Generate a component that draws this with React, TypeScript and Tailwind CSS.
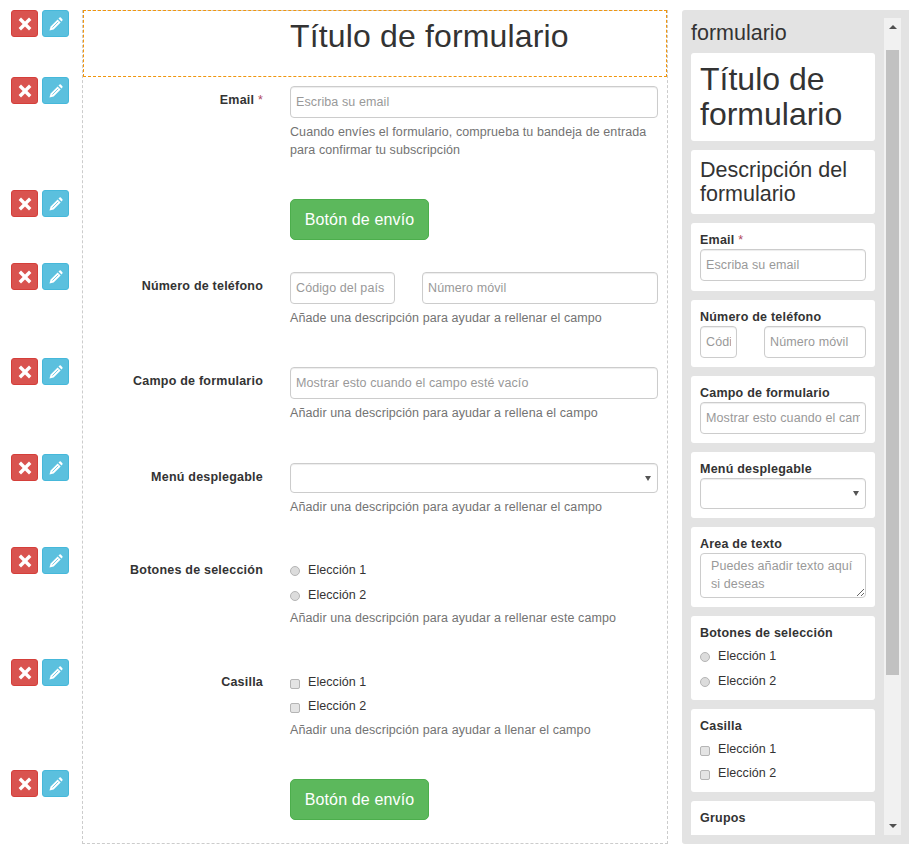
const actionRows = [67, 113, 73, 95, 96, 93, 112, 111, 60];

function Actions() {
  return (
    <div className="flex gap-[4px]">
      <button className="flex h-[27px] w-[27px] items-center justify-center rounded-[3px] border border-[#d43f3a] bg-[#d9534f]">
        <svg viewBox="0 0 14 14" className="h-[14px] w-[14px]">
          <path fill="#fff" d="M3 0.6 7 4.6 11 0.6 13.4 3 9.4 7 13.4 11 11 13.4 7 9.4 3 13.4 0.6 11 4.6 7 0.6 3Z" />
        </svg>
      </button>
      <button className="flex h-[27px] w-[27px] items-center justify-center rounded-[3px] border border-[#46b8da] bg-[#5bc0de]">
        <svg viewBox="0 0 14 14" className="h-[14px] w-[14px]">
          <path fill="#fff" d="M0.5 13.5 1.6 9.4 8.6 2.4 11.6 5.4 4.6 12.4Z" />
          <path fill="#fff" d="M9.5 1.5 10.6 0.6Q11.2 0.1 11.8 0.6L13.4 2.2Q13.9 2.8 13.4 3.4L12.5 4.5Z" />
          <path stroke="#5bc0de" strokeWidth="0.8" d="M3.4 10.6 9.2 4.8" />
        </svg>
      </button>
    </div>
  );
}

const inputClass =
  "block h-[32px] min-w-0 rounded-[4px] border border-[#ccc] bg-white px-[5px] text-[12.5px] tracking-[0.1px] text-[#555] shadow-[inset_0_1px_1px_rgba(0,0,0,0.075)] outline-none placeholder:text-[#999]";

const selectClass =
  "block w-full rounded-[4px] border border-[#ccc] bg-white shadow-[inset_0_1px_1px_rgba(0,0,0,0.075)]";

function Help({ className, children }: { className: string; children: React.ReactNode }) {
  return <p className={`${className} text-[12.5px] leading-[18px] tracking-[0.09px] text-[#737373]`}>{children}</p>;
}

function Star() {
  return <span className="font-normal text-[#b0485a]">*</span>;
}

function Row({ height, label, children }: { height: number; label?: React.ReactNode; children: React.ReactNode }) {
  return (
    <div className="flex gap-[27px] pr-[9px]" style={{ height }}>
      <label className="w-[180px] shrink-0 pt-[5px] text-right text-[12.5px] font-bold leading-[18px] tracking-[0.22px] text-[#333]">
        {label}
      </label>
      <div className="min-w-0 flex-1">{children}</div>
    </div>
  );
}

function Radio({ text }: { text: string }) {
  return (
    <div className="flex h-[25px] items-center gap-[8px] text-[12.5px] tracking-[0.07px] text-[#333]">
      <input
        type="radio"
        className="h-[10px] w-[10px] appearance-none rounded-full border border-[#b5b5b5] bg-[#dcdcdc]"
      />
      <span>{text}</span>
    </div>
  );
}

function Check({ text }: { text: string }) {
  return (
    <div className="flex h-[24px] items-center gap-[8px] text-[12.5px] tracking-[0.07px] text-[#333]">
      <input
        type="checkbox"
        className="mt-[4px] h-[10px] w-[10px] appearance-none rounded-[2px] border border-[#b5b5b5] bg-[#e4e4e4]"
      />
      <span>{text}</span>
    </div>
  );
}

function SubmitButton() {
  return (
    <button className="block h-[41px] w-[139px] rounded-[5px] border border-[#4cae4c] bg-[#5cb85c] text-[16px] tracking-[0.15px] text-white">
      Botón de envío
    </button>
  );
}

function Card({ height, children }: { height: number; children: React.ReactNode }) {
  return (
    <div className="shrink-0 rounded-[3px] bg-white px-[9px] pt-[8px]" style={{ height }}>
      {children}
    </div>
  );
}

function CardLabel({ children }: { children: React.ReactNode }) {
  return <div className="text-[12.5px] font-bold leading-[18px] tracking-[0.22px] text-[#333]">{children}</div>;
}

function Caret() {
  return <span className="absolute right-[7px] top-[13px] h-0 w-0 border-x-[3px] border-t-[5px] border-x-transparent border-t-[#555]" />;
}

export default function App() {
  return (
    <div className="flex h-[852px] w-[909px] overflow-hidden bg-white pt-[10px] font-['Liberation_Sans',Arial,sans-serif]">
      {/* action buttons */}
      <div className="w-[82px] shrink-0 pl-[11px]">
        {actionRows.map((h, i) => (
          <div key={i} style={{ height: h }}>
            <Actions />
          </div>
        ))}
      </div>

      {/* form canvas */}
      <div className="h-[834px] w-[586px] shrink-0 border border-dashed border-[#ccc]">
        <div className="-mt-px flex h-[67px] items-start border border-dashed border-[#f0950c] pl-[206px]">
          <h1 className="pt-[4px] text-[32px] leading-[42px] tracking-[0.15px] text-[#333]">Título de formulario</h1>
        </div>
        <div className="pt-[9px]">
          <Row height={113} label={<>Email <Star /></>}>
            <input className={`${inputClass} w-full`} placeholder="Escriba su email" />
            <Help className="mt-[5px]">
              Cuando envíes el formulario, comprueba tu bandeja de entrada para confirmar tu subscripción
            </Help>
          </Row>
          <Row height={73}>
            <SubmitButton />
          </Row>
          <Row height={95} label="Número de teléfono">
            <div className="flex gap-[27px]">
              <input className={`${inputClass} w-[105px]`} placeholder="Código del país" />
              <input className={`${inputClass} flex-1`} placeholder="Número móvil" />
            </div>
            <Help className="mt-[5px]">Añade una descripción para ayudar a rellenar el campo</Help>
          </Row>
          <Row height={96} label="Campo de formulario">
            <input className={`${inputClass} w-full`} placeholder="Mostrar esto cuando el campo esté vacío" />
            <Help className="mt-[5px]">Añadir una descripción para ayudar a rellena el campo</Help>
          </Row>
          <Row height={93} label="Menú desplegable">
            <div className="relative">
              <div className={`${selectClass} h-[30px]`} />
              <Caret />
            </div>
            <Help className="mt-[5px]">Añadir una descripción para ayudar a rellenar el campo</Help>
          </Row>
          <Row height={112} label="Botones de selección">
            <div className="pt-[2px]">
              <Radio text="Elección 1" />
              <Radio text="Elección 2" />
            </div>
            <Help className="mt-px">Añadir una descripción para ayudar a rellenar este campo</Help>
          </Row>
          <Row height={111} label="Casilla">
            <div className="pt-[2px]">
              <Check text="Elección 1" />
              <Check text="Elección 2" />
            </div>
            <Help className="mt-[3px]">Añadir una descripción para ayudar a llenar el campo</Help>
          </Row>
          <Row height={60}>
            <SubmitButton />
          </Row>
        </div>
      </div>

      {/* component palette */}
      <div className="relative ml-[14px] h-[834px] w-[227px] shrink-0 overflow-hidden rounded-l-[3px] bg-[#e3e3e3] pl-[9px] pt-[10px]">
        <div className="h-[33px] text-[21.5px] leading-[26px] text-[#333]">formulario</div>
        <div className="flex h-[782px] w-[184px] flex-col gap-[9px] overflow-hidden">
          <Card height={88}>
            <div className="pt-px text-[32px] leading-[35px] text-[#333]">Título de formulario</div>
          </Card>
          <Card height={64}>
            <div className="text-[21.5px] leading-[24px] text-[#333]">Descripción del formulario</div>
          </Card>
          <Card height={68}>
            <CardLabel>Email <Star /></CardLabel>
            <input className={`${inputClass} w-full`} placeholder="Escriba su email" />
          </Card>
          <Card height={67}>
            <CardLabel>Número de teléfono</CardLabel>
            <div className="flex gap-[27px]">
              <input className={`${inputClass} w-[37px]`} placeholder="Código del país" />
              <input className={`${inputClass} w-[102px]`} placeholder="Número móvil" />
            </div>
          </Card>
          <Card height={67}>
            <CardLabel>Campo de formulario</CardLabel>
            <input className={`${inputClass} w-full`} placeholder="Mostrar esto cuando el campo esté vacío" />
          </Card>
          <Card height={66}>
            <CardLabel>Menú desplegable</CardLabel>
            <div className="relative">
              <div className={`${selectClass} h-[31px]`} />
              <Caret />
            </div>
          </Card>
          <Card height={80}>
            <CardLabel>Area de texto</CardLabel>
            <textarea
              className="block h-[45px] w-full resize-y rounded-[4px] border border-[#ccc] py-[3px] pl-[10px] pr-[5px] text-[12.5px] leading-[18px] tracking-[0.1px] outline-none placeholder:text-[#999]"
              placeholder="Puedes añadir texto aquí si deseas"
            />
          </Card>
          <Card height={84}>
            <CardLabel>Botones de selección</CardLabel>
            <div className="pt-[2px]">
              <Radio text="Elección 1" />
              <Radio text="Elección 2" />
            </div>
          </Card>
          <Card height={83}>
            <CardLabel>Casilla</CardLabel>
            <div className="pt-[2px]">
              <Check text="Elección 1" />
              <Check text="Elección 2" />
            </div>
          </Card>
          <Card height={60}>
            <CardLabel>Grupos</CardLabel>
          </Card>
        </div>

        {/* scrollbar */}
        <div className="absolute left-[202px] top-[8px] flex h-[817px] w-[17px] flex-col items-center bg-[#f1f1f1]">
          <span className="mt-[7px] h-0 w-0 border-x-[4px] border-b-[4px] border-x-transparent border-b-[#505050]" />
          <div className="mt-[21px] h-[625px] w-[13px] bg-[#c1c1c1]" />
          <span className="mb-[7px] mt-auto h-0 w-0 border-x-[4px] border-t-[4px] border-x-transparent border-t-[#505050]" />
        </div>
      </div>
    </div>
  );
}
